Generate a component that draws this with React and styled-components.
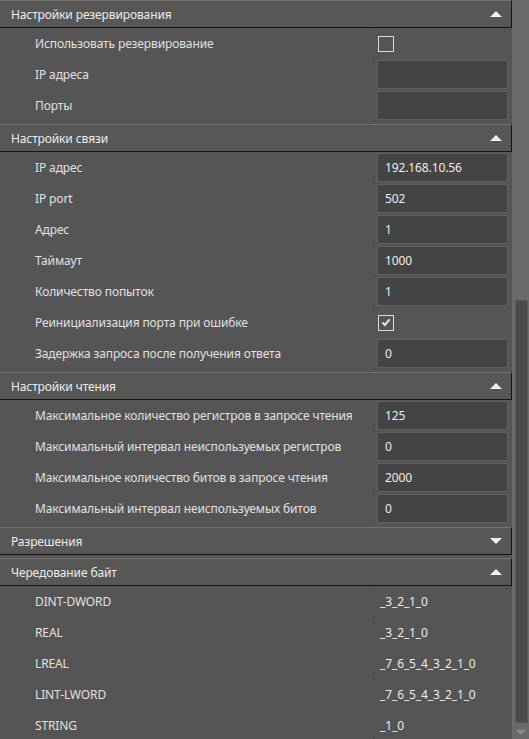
import React from "react";
import styled, { createGlobalStyle } from "styled-components";

const Global = createGlobalStyle`
  html, body {
    margin: 0;
    padding: 0;
    background: #555555;
  }
  body {
    font-family: "Noto Sans", "Open Sans", sans-serif;
    font-size: 12px;
    letter-spacing: -0.12px;
    color: #e2e2e2;
  }
`;

const Window = styled.div`
  display: flex;
  width: 529px;
  height: 739px;
  overflow: hidden;
  background: #555555;
`;

const Content = styled.div`
  width: 512px;
  display: flex;
  flex-direction: column;
`;

const Section = styled.div`
  display: flex;
  flex-direction: column;
  margin-top: ${(p) => (p.$first ? "0" : "3px")};
`;

const Header = styled.div`
  height: 26px;
  display: flex;
  align-items: center;
  justify-content: space-between;
  padding: 0 9px 0 11px;
  border-top: 1px solid #717171;
  border-bottom: 1px solid #151515;
  border-right: 1px solid #151515;
  background: #575756;
  color: #ececec;
`;

const Arrow = styled.span`
  width: 0;
  height: 0;
  border-left: 6px solid transparent;
  border-right: 6px solid transparent;
  ${(p) =>
    p.$open
      ? "border-bottom: 6px solid #efefef;"
      : "border-top: 6px solid #efefef;"}
`;

const Row = styled.div`
  display: grid;
  grid-template-columns: 373px 2px 136px;
  height: 31px;
`;

const Label = styled.div`
  display: flex;
  align-items: center;
  padding-left: 35px;
  color: #e0e0e0;
`;

const Sep = styled.div`
  background: repeating-linear-gradient(
    to bottom,
    #474747 0px,
    #474747 1px,
    #5e5e5e 1px,
    #5e5e5e 2px
  );
`;

const Cell = styled.div`
  display: flex;
  align-items: center;
`;

const Input = styled.div`
  box-sizing: border-box;
  margin: 1px 3px 1px 2px;
  width: 131px;
  height: 29px;
  display: flex;
  align-items: center;
  padding-left: 7px;
  background: #444444;
  border: 1px solid #606060;
  color: #ececec;
`;

const Plain = styled.div`
  padding-left: 5px;
  color: #ececec;
`;

const Box = styled.div`
  box-sizing: border-box;
  width: 16px;
  height: 16px;
  margin-left: 3px;
  border: 1px solid #dadada;
  display: flex;
  align-items: center;
  justify-content: center;
`;

const Scroll = styled.div`
  width: 17px;
  height: 739px;
  box-sizing: border-box;
  background: #6a6a6a;
  display: flex;
  flex-direction: column;
  align-items: center;
  padding-top: 300px;
`;

const Thumb = styled.div`
  width: 13px;
  height: 423px;
  box-sizing: border-box;
  background: #4b4b4b;
  border: 1px solid #5a5a5a;
  margin-left: 1px;
`;

const DownArrow = styled.span`
  margin-top: 7px;
  width: 0;
  height: 0;
  border-left: 5px solid transparent;
  border-right: 5px solid transparent;
  border-top: 5px solid #8c8c8c;
`;

const sections = [
  {
    title: "Настройки резервирования",
    open: true,
    rows: [
      { label: "Использовать резервирование", check: false },
      { label: "IP адреса", input: "" },
      { label: "Порты", input: "" },
    ],
  },
  {
    title: "Настройки связи",
    open: true,
    rows: [
      { label: "IP адрес", input: "192.168.10.56" },
      { label: "IP port", input: "502" },
      { label: "Адрес", input: "1" },
      { label: "Таймаут", input: "1000" },
      { label: "Количество попыток", input: "1" },
      { label: "Реинициализация порта при ошибке", check: true },
      { label: "Задержка запроса после получения ответа", input: "0" },
    ],
  },
  {
    title: "Настройки чтения",
    open: true,
    rows: [
      { label: "Максимальное количество регистров в запросе чтения", input: "125" },
      { label: "Максимальный интервал неиспользуемых регистров", input: "0" },
      { label: "Максимальное количество битов в запросе чтения", input: "2000" },
      { label: "Максимальный интервал неиспользуемых битов", input: "0" },
    ],
  },
  { title: "Разрешения", open: false, rows: [] },
  {
    title: "Чередование байт",
    open: true,
    rows: [
      { label: "DINT-DWORD", text: "_3_2_1_0" },
      { label: "REAL", text: "_3_2_1_0" },
      { label: "LREAL", text: "_7_6_5_4_3_2_1_0" },
      { label: "LINT-LWORD", text: "_7_6_5_4_3_2_1_0" },
      { label: "STRING", text: "_1_0" },
    ],
  },
];

function Value({ row }) {
  if (row.check !== undefined) {
    return (
      <Box>
        {row.check && (
          <svg width="10" height="9" viewBox="0 0 10 9">
            <path
              d="M1.5 4.4 L3.9 6.9 L8.6 1.4"
              fill="none"
              stroke="#e4e4e4"
              strokeWidth="2.2"
            />
          </svg>
        )}
      </Box>
    );
  }
  if (row.text !== undefined) return <Plain>{row.text}</Plain>;
  return <Input>{row.input}</Input>;
}

export default function App() {
  return (
    <>
      <Global />
      <Window>
        <Content>
          {sections.map((s, i) => (
            <Section key={s.title} $first={i === 0}>
              <Header>
                {s.title}
                <Arrow $open={s.open} />
              </Header>
              {s.rows.map((r) => (
                <Row key={r.label}>
                  <Label>{r.label}</Label>
                  <Sep />
                  <Cell>
                    <Value row={r} />
                  </Cell>
                </Row>
              ))}
            </Section>
          ))}
        </Content>
        <Scroll>
          <Thumb />
          <DownArrow />
        </Scroll>
      </Window>
    </>
  );
}
